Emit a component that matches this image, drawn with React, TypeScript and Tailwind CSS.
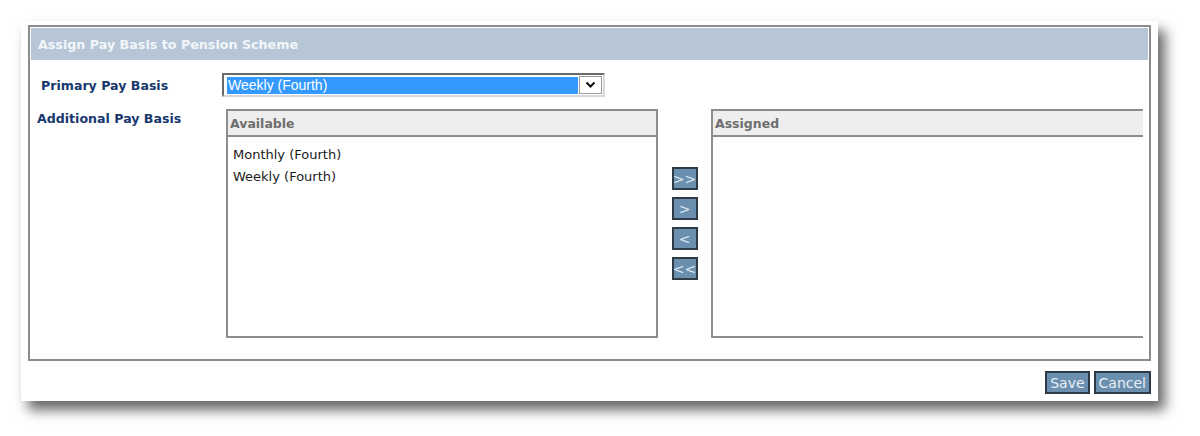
import React from 'react';

// Pay basis assignment dialog
const available = ['Monthly (Fourth)', 'Weekly (Fourth)'];
const moveButtons = ['>>', '>', '<', '<<'];

function ListBox({ title, items, clipped }: { title: string; items: string[]; clipped?: boolean }) {
  return (
    <div
      className={`flex h-[229px] w-[432px] flex-col border-2 border-[#8c8c8c] bg-white ${clipped ? 'border-r-0' : ''}`}
    >
      <div className="flex h-[26px] items-center border-b-2 border-[#8c8c8c] bg-[#eeeeee] pl-[2px] pt-[2px] text-[12.5px] font-bold text-[#6e6e6e]">
        {title}
      </div>
      <div className="flex flex-col gap-[2px] pl-[5px] pt-[8px] text-[13px] text-[#1a1a1a]">
        {items.map((item) => (
          <div key={item}>{item}</div>
        ))}
      </div>
    </div>
  );
}

export default function App() {
  return (
    <div className="h-[436px] w-[1200px] bg-white pl-[21px] pt-[21px] font-['DejaVu_Sans',Verdana,sans-serif]">
      <div className="flex h-[380px] w-[1137px] flex-col bg-white shadow-[7px_9px_12px_rgba(0,0,0,0.6)]">
        {/* framed content */}
        <div className="mx-[7px] mt-[4px] flex h-[336px] flex-col border-2 border-[#8c8c8c] p-[1px]">
          <div className="flex h-[32px] items-center bg-[#b6c6d6] pl-[7px] pt-[2px] text-[12.7px] font-bold text-[#f2f6fa]">
            Assign Pay Basis to Pension Scheme
          </div>

          <div className="mt-[13px] flex items-center">
            <div className="w-[191px] pl-[10px] pt-[2px] text-[12.6px] font-bold text-[#17386e]">Primary Pay Basis</div>
            <div className="flex h-[24px] w-[383px] items-center border-2 border-t-[#6a6a6a] border-l-[#6a6a6a] border-b-[#d8d8d8] border-r-[#d8d8d8] bg-white pl-[3px] pr-[1px]">
              <div className="flex h-[17px] flex-1 items-center bg-[#3399ff] pl-[1px] font-['Liberation_Sans',Arial,sans-serif] text-[14px] text-white">
                Weekly (Fourth)
              </div>
              <div className="ml-[1px] flex h-[18px] w-[23px] items-center justify-center border border-[#9a9a9a] bg-white">
                <svg width="11" height="8" viewBox="0 0 11 8">
                  <path d="M1.5 1.5 L5.5 5.5 L9.5 1.5" fill="none" stroke="#111" strokeWidth="2" />
                </svg>
              </div>
            </div>
          </div>

          <div className="mt-[12px] flex">
            <div className="w-[195px] pl-[6px] pt-[1px] text-[12.6px] font-bold text-[#17386e]">Additional Pay Basis</div>
            <ListBox title="Available" items={available} />
            <div className="flex w-[53px] flex-col items-center justify-center gap-[7px]">
              {moveButtons.map((b) => (
                <button
                  key={b}
                  className="flex h-[23px] w-[26px] items-center justify-center border-2 border-[#2e3a46] bg-[#6b8fae] font-['DejaVu_Sans',sans-serif] text-[14px] leading-none tracking-[0px] text-[#dde8f2]"
                >
                  {b}
                </button>
              ))}
            </div>
            <ListBox title="Assigned" items={[]} clipped />
          </div>
        </div>

        <div className="mr-[7px] mt-[10px] flex justify-end gap-[4px]">
          {['Save', 'Cancel'].map((label) => (
            <button
              key={label}
              className="h-[23px] border-2 border-[#2e3a46] bg-[#6b8fae] px-[3px] font-['DejaVu_Sans',sans-serif] text-[14px] leading-none text-[#e8f0f7]"
            >
              {label}
            </button>
          ))}
        </div>
      </div>
    </div>
  );
}
